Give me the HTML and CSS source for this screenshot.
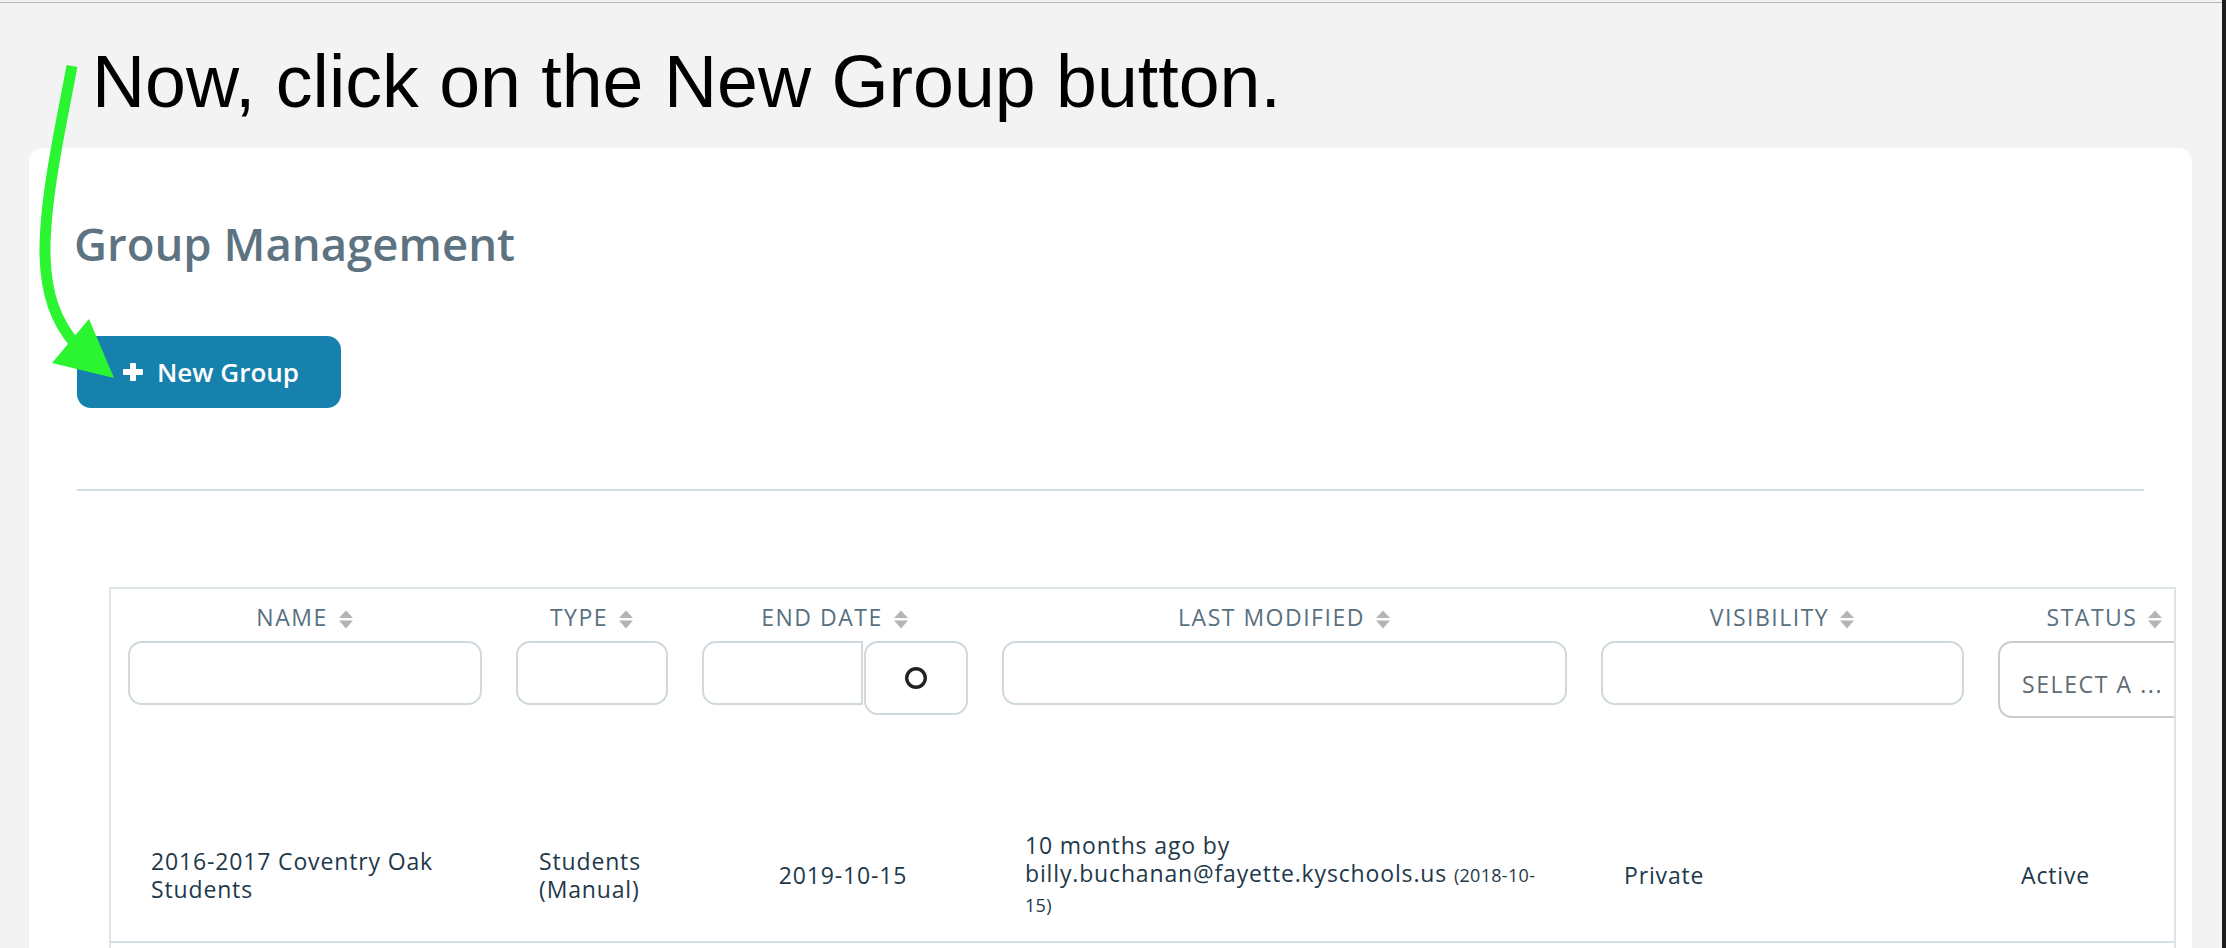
FILE: index.html
```html
<!DOCTYPE html>
<html lang="en">
<head>
<meta charset="utf-8">
<title>Group Management</title>
<link rel="stylesheet" href="styles.css">
</head>
<body>
<div class="app">
  <p class="instruction">Now, click on the New Group button.</p>
  <section class="card">
    <h1 class="title">Group Management</h1>
    <button class="btn-new" type="button">
      <svg class="plus" viewBox="0 0 20 18" width="20" height="18"><rect x="7" y="0" width="6" height="18" rx="1" fill="#fff"/><rect x="0" y="6" width="20" height="6" rx="1" fill="#fff"/></svg>
      <span>New Group</span>
    </button>
    <hr class="divider">
    <div class="table">
      <div class="thead">
        <div class="th">
          <div class="label">NAME <svg class="sort" viewBox="0 0 16 19" width="16" height="19"><polygon points="1,8 8,0.5 15,8" fill="#b4b4b4"/><polygon points="1,10.5 15,10.5 8,18.5" fill="#b4b4b4"/></svg></div>
          <div class="field"></div>
        </div>
        <div class="th">
          <div class="label">TYPE <svg class="sort" viewBox="0 0 16 19" width="16" height="19"><polygon points="1,8 8,0.5 15,8" fill="#b4b4b4"/><polygon points="1,10.5 15,10.5 8,18.5" fill="#b4b4b4"/></svg></div>
          <div class="field"></div>
        </div>
        <div class="th">
          <div class="label">END DATE <svg class="sort" viewBox="0 0 16 19" width="16" height="19"><polygon points="1,8 8,0.5 15,8" fill="#b4b4b4"/><polygon points="1,10.5 15,10.5 8,18.5" fill="#b4b4b4"/></svg></div>
          <div class="date-group">
            <div class="field date-field"></div>
            <div class="date-btn"><svg viewBox="0 0 24 24" width="24" height="24"><circle cx="12" cy="12" r="9.3" fill="none" stroke="#222" stroke-width="3.4"/></svg></div>
          </div>
        </div>
        <div class="th">
          <div class="label">LAST MODIFIED <svg class="sort" viewBox="0 0 16 19" width="16" height="19"><polygon points="1,8 8,0.5 15,8" fill="#b4b4b4"/><polygon points="1,10.5 15,10.5 8,18.5" fill="#b4b4b4"/></svg></div>
          <div class="field"></div>
        </div>
        <div class="th">
          <div class="label">VISIBILITY <svg class="sort" viewBox="0 0 16 19" width="16" height="19"><polygon points="1,8 8,0.5 15,8" fill="#b4b4b4"/><polygon points="1,10.5 15,10.5 8,18.5" fill="#b4b4b4"/></svg></div>
          <div class="field"></div>
        </div>
        <div class="th">
          <div class="label">STATUS <svg class="sort" viewBox="0 0 16 19" width="16" height="19"><polygon points="1,8 8,0.5 15,8" fill="#b4b4b4"/><polygon points="1,10.5 15,10.5 8,18.5" fill="#b4b4b4"/></svg></div>
          <div class="select">SELECT A ...</div>
        </div>
      </div>
      <div class="tr">
        <div class="td">2016-2017 Coventry Oak<br>Students</div>
        <div class="td">Students<br>(Manual)</div>
        <div class="td td-date">2019-10-15</div>
        <div class="td">10 months ago by<br>billy.buchanan@fayette.kyschools.us <small>(2018-10-<br>15)</small></div>
        <div class="td">Private</div>
        <div class="td">Active</div>
      </div>
    </div>
  </section>
</div>
<div class="strip"></div>
<svg class="arrow" viewBox="0 0 400 420" width="400" height="420">
  <path d="M72 66 C62 120 44 200 45 255 C46 295 56 322 76 345" fill="none" stroke="#2bf431" stroke-width="11" stroke-linecap="butt"/>
  <polygon points="89,319 52,363 114,378" fill="#2bf431"/>
</svg>
</body>
</html>
```
FILE: styles.css
```css
html, body {
  margin: 0;
  padding: 0;
}
body {
  width: 2226px;
  height: 948px;
  overflow: hidden;
  display: flex;
  background: #f3f3f3;
  position: relative;
}
.app {
  width: 2222px;
  margin-top: 2px;
  border-top: 1px solid #b8b8b8;
  display: flex;
  flex-direction: column;
}
.strip {
  width: 4px;
  background: #1c1c1c;
}
.instruction {
  margin: 0;
  padding: 42px 0 0 92px;
  font-family: "Liberation Sans", Arial, sans-serif;
  font-size: 73.5px;
  line-height: 73.5px;
  color: #000;
}
.card {
  margin: 29.5px 0 0 29px;
  width: 2163px;
  flex: 1;
  background: #fff;
  border-radius: 14px 14px 0 0;
  padding: 68px 48px 0 48px;
  box-sizing: border-box;
  font-family: "Open Sans", sans-serif;
}
.title {
  margin: 0 0 0 -3px;
  font-size: 45.5px;
  line-height: 55px;
  font-weight: 600;
  color: #5d7381;
}
.btn-new {
  margin-top: 65px;
  width: 264px;
  height: 72px;
  border: none;
  border-radius: 14px;
  background: #1781ae;
  color: #fff;
  display: flex;
  align-items: center;
  padding: 0 0 0 46px;
  gap: 14px;
  font-family: "Open Sans", sans-serif;
  font-size: 26px;
  font-weight: 600;
}
.btn-new span {
  line-height: 30px;
}
.divider {
  margin: 81px 0 0 0;
  border: none;
  height: 2px;
  background: #d3dde1;
}
.table {
  margin: 96px -32px 0 32px;
  border: 2px solid #dde5e8;
  border-bottom: none;
  overflow: hidden;
  height: 400px;
}
.thead, .tr {
  display: grid;
  grid-template-columns: 388px 186px 300px 599px 397px 248px;
}
.thead {
  padding: 13px 0 87px 0;
  align-items: start;
}
.th {
  padding: 0 17px;
}
.label {
  display: flex;
  justify-content: center;
  align-items: center;
  gap: 10px;
  height: 30px;
  font-size: 23px;
  line-height: 30px;
  letter-spacing: 1.5px;
  color: #587080;
  white-space: nowrap;
  margin-bottom: 9px;
}
.sort {
  margin-top: 4px;
  flex: none;
}
.field {
  height: 64px;
  box-sizing: border-box;
  border: 2px solid #cfd9de;
  border-radius: 14px;
  background: #fff;
}
.date-group {
  display: flex;
  align-items: flex-start;
}
.date-field {
  flex: 1;
  border-radius: 14px 0 0 14px;
}
.date-btn {
  width: 104px;
  height: 74px;
  margin-left: 1px;
  box-sizing: border-box;
  border: 2px solid #cfd9de;
  border-radius: 14px;
  display: flex;
  align-items: center;
  justify-content: center;
}
.select {
  height: 77px;
  box-sizing: border-box;
  border: 2px solid #cbcbcb;
  border-radius: 14px;
  display: flex;
  align-items: center;
  padding: 8px 0 0 22px;
  font-size: 23px;
  letter-spacing: 1.6px;
  color: #5f6a73;
  white-space: nowrap;
}
.tr {
  min-height: 136px;
  align-items: center;
  border-bottom: 2px solid #d6e0e4;
}
.td {
  padding: 4px 20px 0 40px;
  font-size: 23px;
  line-height: 28px;
  letter-spacing: 0.85px;
  color: #1e394a;
  white-space: nowrap;
}
.td small {
  font-size: 18px;
  letter-spacing: 0.3px;
}
.td-date {
  text-align: center;
  padding: 4px 0 0 16px;
}
.arrow {
  position: absolute;
  left: 0;
  top: 0;
  pointer-events: none;
}
```
